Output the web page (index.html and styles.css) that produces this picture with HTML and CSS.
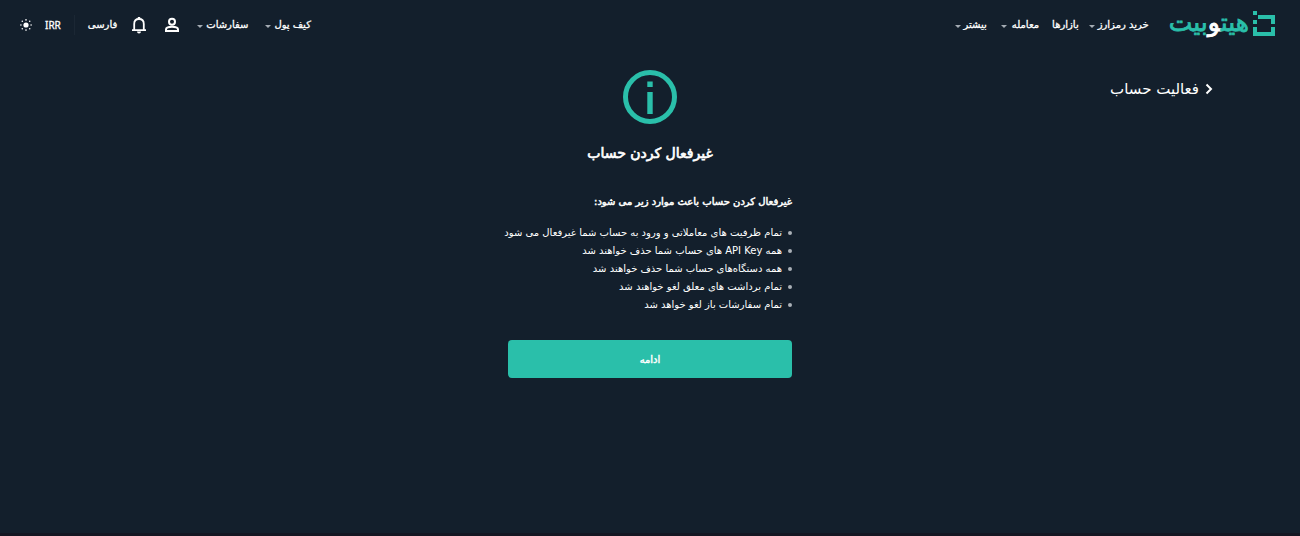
FILE: index.html
```html
<!DOCTYPE html>
<html lang="fa" dir="rtl">
<head>
<meta charset="utf-8">
<meta name="viewport" content="width=device-width, initial-scale=1">
<title>غیرفعال کردن حساب</title>
<link rel="stylesheet" href="styles.css">
</head>
<body>
<header class="header">
  <a class="logo" href="#">
    <svg class="logo-mark" viewBox="0 0 22 26" aria-hidden="true">
      <path fill="#2abfaa" d="M0 0h4v4H0zM5 4h17v9h-4V8H5zM0 9h4v4H0zM0 16h4v5h14v-5h4v9H0z"/>
    </svg>
    <span class="logo-text">هیت<span class="logo-accent">و</span>بیت</span>
  </a>
  <nav class="nav">
    <a class="nav-item" href="#">خرید رمزارز<i class="caret"></i></a>
    <a class="nav-item" href="#">بازارها</a>
    <a class="nav-item nav-trade" href="#">معامله<i class="caret"></i></a>
    <a class="nav-item" href="#">بیشتر<i class="caret"></i></a>
  </nav>
  <div class="tools">
    <div class="account">
      <a class="nav-item" href="#">کیف پول<i class="caret"></i></a>
      <a class="nav-item" href="#">سفارشات<i class="caret"></i></a>
      <button class="icon-button" aria-label="حساب کاربری">
        <svg width="16" height="16" viewBox="0 0 16 16" fill="none" stroke="#fff" stroke-width="2"><circle cx="8" cy="4.800" r="3"/><path d="M2 14v-1.500C2 10.500 5.500 9.800 8 9.800s6 .7 6 2.700V14z"/></svg>
      </button>
      <button class="icon-button" aria-label="اعلان‌ها">
        <svg width="16" height="18" viewBox="0 0 16 18"><path fill="none" stroke="#fff" stroke-width="1.800" d="M1 14.200h14M3.200 14V8c0-3 2-5 4.800-5s4.800 2 4.800 5v6"/><path fill="#fff" d="M6.800 1h2.400v2H6.800zM6 15.600h4A2 2 0 0 1 6 15.600z"/></svg>
      </button>
    </div>
    <div class="settings">
      <a class="nav-item" href="#">فارسی</a>
      <span class="divider"></span>
      <a class="nav-item nav-currency" href="#">IRR</a>
      <button class="icon-button" aria-label="حالت روشن">
        <svg width="12" height="12" viewBox="0 0 12 12" fill="#fff"><circle cx="6" cy="6" r="2.600"/><circle cx="6" cy=".9" r=".8"/><circle cx="6" cy="11.100" r=".8"/><circle cx=".9" cy="6" r=".8"/><circle cx="11.100" cy="6" r=".8"/><circle cx="2.300" cy="2.300" r=".8"/><circle cx="9.700" cy="2.300" r=".8"/><circle cx="2.300" cy="9.700" r=".8"/><circle cx="9.700" cy="9.700" r=".8"/></svg>
      </button>
    </div>
  </div>
</header>
<main class="page">
  <a class="back" href="#">
    <svg width="8" height="12" viewBox="0 0 8 12" fill="none" stroke="#fff" stroke-width="2"><path d="M1.500 1.500 6 6l-4.500 4.500"/></svg>
    <span>فعالیت حساب</span>
  </a>
  <section class="content">
    <svg class="info" viewBox="0 0 54 54" aria-hidden="true"><circle cx="27" cy="27" r="24.500" fill="none" stroke="#2abfaa" stroke-width="5"/><path fill="#2abfaa" d="M24.300 11.500h5.400V17h-5.400zM24.300 22h5.400v22h-5.400z"/></svg>
    <h1 class="title">غیرفعال کردن حساب</h1>
    <h2 class="subtitle">غیرفعال کردن حساب باعث موارد زیر می شود:</h2>
    <ul class="effects">
      <li>تمام ظرفیت های معاملاتی و ورود به حساب شما غیرفعال می شود</li>
      <li>همه API Key های حساب شما حذف خواهند شد</li>
      <li>همه دستگاه‌های حساب شما حذف خواهند شد</li>
      <li>تمام برداشت های معلق لغو خواهند شد</li>
      <li>تمام سفارشات باز لغو خواهد شد</li>
    </ul>
    <button class="submit">ادامه</button>
  </section>
</main>
</body>
</html>
```
FILE: styles.css
```css
* { box-sizing: border-box; }
body {
  margin: 0;
  min-height: 100vh;
  background: #131f2c;
  color: #fff;
  font-family: "DejaVu Sans", sans-serif;
  font-size: 10px;
  border-bottom: 3px solid #141622;
}
a { color: inherit; text-decoration: none; }
button { padding: 0; border: 0; background: none; color: inherit; font: inherit; }
.header {
  display: flex;
  align-items: center;
  height: 48px;
  padding: 0 25px 0 20px;
}
.logo { display: flex; align-items: center; gap: 4px; white-space: nowrap; }
.logo-mark { width: 22px; height: 26px; flex: none; }
.logo-text { color: #2abfaa; font-size: 25px; line-height: 24px; padding-bottom: 2px; -webkit-text-stroke: 0.8px; }
.logo-accent { color: #fff; }
.nav { display: flex; gap: 10px; margin-right: 20px; padding-top: 2px; }
.nav-item {
  display: flex;
  align-items: center;
  gap: 3px;
  line-height: 20px;
  white-space: nowrap;
  -webkit-text-stroke: 0.3px;
}
.nav-trade { gap: 5px; margin: 0 3px 0 4px; }
.caret {
  margin-top: 3px;
  border: 3px solid transparent;
  border-top-color: #a4abb3;
  border-bottom: 0;
}
.tools { display: flex; align-items: center; gap: 14px; margin-right: auto; padding-top: 2px; }
.account { display: flex; align-items: center; gap: 17px; }
.settings { display: flex; align-items: center; gap: 13px; }
.icon-button { display: flex; }
.divider { width: 1px; height: 20px; background: #1b2734; }
.nav-currency { font-family: "Noto Sans", sans-serif; }
.page {
  display: grid;
  grid-template-columns: 1fr 284px 1fr;
  padding: 22px 87px 0;
}
.back {
  display: flex;
  align-items: center;
  gap: 6px;
  height: 38px;
  font-size: 15px;
  white-space: nowrap;
}
.content { display: flex; flex-direction: column; }
.info { width: 54px; height: 54px; align-self: center; }
.title {
  margin: 16px 0 0;
  font-size: 14px;
  font-weight: normal;
  line-height: 26px;
  text-align: center;
  white-space: nowrap;
  -webkit-text-stroke: 0.7px;
}
.subtitle {
  margin: 26px 0 0;
  font-size: 10px;
  font-weight: normal;
  line-height: 20px;
  white-space: nowrap;
  -webkit-text-stroke: 0.5px;
}
.effects { margin: 12px 0 0; padding: 0; list-style: none; line-height: 18px; white-space: nowrap; }
.effects li { display: flex; align-items: center; gap: 6px; }
.effects li::before { content: ""; flex: none; width: 4px; height: 4px; border-radius: 50%; background: #aab0b7; }
.submit {
  height: 38px;
  margin-top: 26px;
  border-radius: 4px;
  background: #2abfaa;
  -webkit-text-stroke: 0.4px;
}
```
